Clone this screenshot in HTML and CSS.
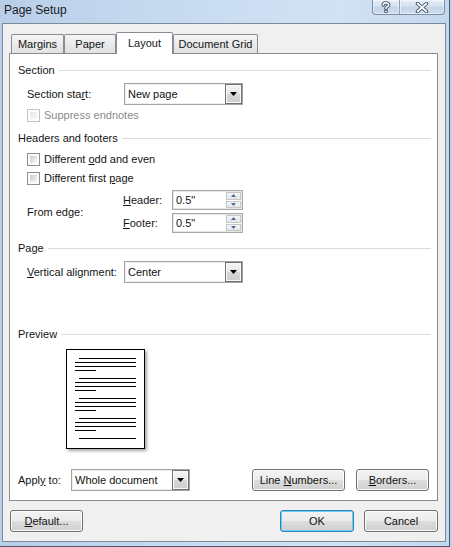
FILE: index.html
```html
<!DOCTYPE html>
<html>
<head>
<meta charset="utf-8">
<title>Page Setup</title>
<link rel="stylesheet" href="styles.css">
</head>
<body>
<div class="window">
  <div class="titlebar">
    <span class="title">Page Setup</span>
    <div class="caption">
      <div class="cbtn help">
        <svg width="10" height="12" viewBox="0 0 10 12">
          <path d="M2.2 4 C2.2 1.2 7.8 1.2 7.8 3.8 C7.8 5.6 5 5.8 5 7.6" fill="none" stroke="#3b4a5e" stroke-width="3.4" stroke-linecap="round"/>
          <path d="M2.2 4 C2.2 1.2 7.8 1.2 7.8 3.8 C7.8 5.6 5 5.8 5 7.6" fill="none" stroke="#fff" stroke-width="1.6" stroke-linecap="round"/>
          <rect x="3.3" y="8.8" width="3.4" height="3" rx="0.6" fill="#3b4a5e"/>
          <rect x="4.2" y="9.6" width="1.6" height="1.5" fill="#fff"/>
        </svg>
      </div>
      <div class="cbtn close">
        <svg width="14" height="11" viewBox="0 0 14 11">
          <path d="M2.5 1.5 L11.5 9.5 M11.5 1.5 L2.5 9.5" stroke="#3b4a5e" stroke-width="3.6" stroke-linecap="round"/>
          <path d="M2.5 1.5 L11.5 9.5 M11.5 1.5 L2.5 9.5" stroke="#fff" stroke-width="1.7" stroke-linecap="round"/>
        </svg>
      </div>
    </div>
  </div>

  <div class="client">
    <div class="tabs">
      <div class="tab t-margins">Margins</div>
      <div class="tab t-paper">Paper</div>
      <div class="tab t-layout active">Layout</div>
      <div class="tab t-grid">Document Grid</div>
    </div>

    <div class="panel">
      <div class="group"><span>Section</span><i class="rule"></i></div>

      <div class="row r-combo indent">
        <span class="lbl w97">Section sta<u>r</u>t:</span>
        <div class="combo"><span class="val">New page</span><span class="drop"><svg width="7" height="4" viewBox="0 0 7 4"><path d="M0 0h7L3.5 4z"/></svg></span></div>
      </div>

      <div class="row r-check r-suppress indent disabled">
        <span class="cb"></span><span>Suppress endnotes</span>
      </div>

      <div class="group g-headers"><span>Headers and footers</span><i class="rule"></i></div>

      <div class="row r-check r-odd indent">
        <span class="cb"></span><span>Different <u>o</u>dd and even</span>
      </div>
      <div class="row r-check r-first indent">
        <span class="cb"></span><span>Different first <u>p</u>age</span>
      </div>

      <div class="row r-edge indent">
        <span class="lbl w96">From edge:</span>
        <div class="spins">
          <div class="spinrow">
            <span class="lbl w49"><u>H</u>eader:</span>
            <div class="spin"><span class="val">0.5"</span>
              <span class="sbtns">
                <span class="sb"><svg width="5" height="3" viewBox="0 0 5 3"><path d="M2.5 0L5 3H0z"/></svg></span>
                <span class="sb"><svg width="5" height="3" viewBox="0 0 5 3"><path d="M0 0h5L2.5 3z"/></svg></span>
              </span>
            </div>
          </div>
          <div class="spinrow">
            <span class="lbl w49"><u>F</u>ooter:</span>
            <div class="spin"><span class="val">0.5"</span>
              <span class="sbtns">
                <span class="sb"><svg width="5" height="3" viewBox="0 0 5 3"><path d="M2.5 0L5 3H0z"/></svg></span>
                <span class="sb"><svg width="5" height="3" viewBox="0 0 5 3"><path d="M0 0h5L2.5 3z"/></svg></span>
              </span>
            </div>
          </div>
        </div>
      </div>

      <div class="group g-page"><span>Page</span><i class="rule"></i></div>

      <div class="row r-combo r-valign indent">
        <span class="lbl w97"><u>V</u>ertical alignment:</span>
        <div class="combo"><span class="val">Center</span><span class="drop"><svg width="7" height="4" viewBox="0 0 7 4"><path d="M0 0h7L3.5 4z"/></svg></span></div>
      </div>

      <div class="group g-preview"><span>Preview</span><i class="rule"></i></div>

      <div class="preview">
        <svg width="77" height="98" viewBox="0 0 77 98">
          <g fill="#000">
            <rect x="12" y="8" width="57" height="1"/>
            <rect x="8" y="12" width="61" height="1"/>
            <rect x="8" y="16" width="61" height="1"/>
            <rect x="8" y="20" width="21" height="1"/>

            <rect x="12" y="28" width="57" height="1"/>
            <rect x="8" y="32" width="61" height="1"/>
            <rect x="8" y="36" width="61" height="1"/>
            <rect x="8" y="40" width="21" height="1"/>

            <rect x="12" y="48" width="57" height="1"/>
            <rect x="8" y="52" width="61" height="1"/>
            <rect x="8" y="56" width="61" height="1"/>
            <rect x="8" y="60" width="21" height="1"/>

            <rect x="12" y="68" width="57" height="1"/>
            <rect x="8" y="72" width="61" height="1"/>
            <rect x="8" y="76" width="61" height="1"/>
            <rect x="8" y="80" width="21" height="1"/>

            <rect x="12" y="88" width="57" height="1"/>
          </g>
        </svg>
      </div>

      <div class="row r-apply">
        <span class="lbl w53">Appl<u>y</u> to:</span>
        <div class="combo"><span class="val">Whole document</span><span class="drop"><svg width="7" height="4" viewBox="0 0 7 4"><path d="M0 0h7L3.5 4z"/></svg></span></div>
        <div class="btn b-lines"><span>Line <u>N</u>umbers...</span></div>
        <div class="btn b-borders"><span><u>B</u>orders...</span></div>
      </div>
    </div>

    <div class="btnrow">
      <div class="btn b-default"><span><u>D</u>efault...</span></div>
      <div class="btn b-ok"><span>OK</span></div>
      <div class="btn b-cancel"><span>Cancel</span></div>
    </div>
  </div>
</div>
</body>
</html>
```
FILE: styles.css
```css
* { box-sizing: border-box; }

html, body {
  margin: 0;
  padding: 0;
}

body {
  width: 452px;
  height: 547px;
  overflow: hidden;
  font-family: "Liberation Sans", Arial, sans-serif;
  font-size: 11px;
  color: #151515;
  background: #c6d8ee;
}

u { text-decoration-thickness: 1px; text-underline-offset: 1px; }

.window {
  width: 452px;
  height: 547px;
  display: flex;
  flex-direction: column;
  background: linear-gradient(to right, #b9cfe9 0%, #c9dcf1 45%, #d2e2f4 75%, #c3d7ee 100%);
  box-shadow: inset -2px 0 0 #bdd2ea, inset -3px 0 0 #4b5767, inset 0 -1px 0 #4b5767;
}

/* title bar */
.titlebar {
  height: 23px;
  flex: none;
  display: flex;
  justify-content: space-between;
  align-items: flex-start;
}

.title {
  padding-left: 4px;
  font-size: 12px;
  line-height: 20px;
  color: #1a1a1a;
}

.caption {
  display: flex;
  margin-right: 7px;
}

.cbtn {
  height: 15px;
  border: 1px solid #7b8ca4;
  border-top: none;
  background: linear-gradient(#e6eef8 0%, #d5e1ef 45%, #c4d4e8 50%, #cfdcec 100%);
  box-shadow: inset 0 0 0 1px rgba(255,255,255,0.45);
  display: flex;
  align-items: center;
  justify-content: center;
}

.help {
  width: 28px;
  border-radius: 0 0 0 4px;
}

.close {
  width: 46px;
  border-left: 1px solid #8d9db3;
  border-radius: 0 0 4px 0;
  margin-left: -1px;
}

/* client area */
.client {
  flex: none;
  margin-left: 2px;
  width: 444px;
  height: 519px;
  border: 1px solid #7f8a98;
  background: #f0f0f0;
  padding: 8px 0 0 6px;
}

/* tabs */
.tabs {
  display: flex;
  align-items: flex-end;
  height: 21px;
  margin-left: 2px;
}

.tab {
  height: 19px;
  border: 1px solid #898c95;
  border-bottom: none;
  border-radius: 2px 2px 0 0;
  background: linear-gradient(#f5f5f5, #e8e8e8 60%, #e2e2e2);
  display: flex;
  align-items: center;
  justify-content: center;
  color: #151515;
}

.t-margins { width: 53px; }
.t-paper { width: 52px; }
.t-layout { width: 57px; }
.t-grid { width: 85px; }

.tab.active {
  height: 22px;
  margin-bottom: -1px;
  padding-bottom: 2px;
  background: #fff;
  position: relative;
  z-index: 1;
}

/* panel */
.panel {
  width: 429px;
  height: 448px;
  border: 1px solid #898c95;
  background: #fff;
  padding: 8px 6px 0 8px;
}

.group {
  height: 16px;
  display: flex;
  align-items: center;
  line-height: 16px;
  color: #151515;
}

.rule {
  flex: 1;
  height: 1px;
  margin-left: 4px;
  background: #d5dee6;
}

.g-headers { margin-top: 8px; }
.g-page { margin-top: 7px; }
.g-preview { margin-top: 43px; }

.row {
  display: flex;
  align-items: center;
}

.indent { margin-left: 9px; }

.lbl { flex: none; white-space: nowrap; }
.w97 { width: 97px; }
.w96 { width: 96px; }
.w49 { width: 49px; }
.w53 { width: 53px; }

.r-combo { margin-top: 5px; height: 22px; }

.r-check { height: 13px; line-height: 13px; }
.r-suppress { margin-top: 4px; }
.r-odd { margin-top: 7px; }
.r-first { margin-top: 6px; }
.disabled { color: #8b8b8b; }

.cb {
  flex: none;
  width: 13px;
  height: 13px;
  margin-right: 4px;
  border: 1px solid #8e8f8f;
  padding: 2px;
  background: linear-gradient(135deg, #c9cdd3, #eef0f2 80%, #f8f8f8) content-box, #fbfbfb;
}

.disabled .cb {
  border-color: #c4c4c4;
  background: linear-gradient(135deg, #e9e9e9, #f7f7f7) content-box, #fdfdfd;
}

/* combo box */
.combo {
  flex: none;
  width: 119px;
  height: 22px;
  border: 1px solid #a3a3a3;
  background: #fff;
  display: flex;
  padding-left: 3px;
  box-shadow: inset 0 0 0 1px #eeeeee;
}

.combo .val {
  align-self: center;
  color: #111;
}

.drop {
  margin-left: auto;
  width: 17px;
  border: 1px solid #707070;
  background: linear-gradient(#f4f4f4, #e8e8e8 50%, #d7d7d7 51%, #cdcdcd);
  box-shadow: inset 0 0 0 1px #fafafa;
  display: flex;
  align-items: center;
  justify-content: center;
}

.drop svg { fill: #000; }

/* spin boxes */
.r-edge { margin-top: 5px; }

.spins {
  display: flex;
  flex-direction: column;
  gap: 3px;
}

.spinrow {
  display: flex;
  align-items: center;
  height: 20px;
}

.spin {
  width: 71px;
  height: 20px;
  border: 1px solid #a9a9a9;
  box-shadow: inset 0 0 0 1px #e6e6e6;
  background: #fff;
  display: flex;
  padding: 1px 1px 1px 3px;
}

.spin .val { align-self: center; color: #111; }

.sbtns {
  margin-left: auto;
  width: 15px;
  display: flex;
  flex-direction: column;
  gap: 1px;
}

.sb {
  flex: 1;
  border: 1px solid #c6c6c6;
  background: linear-gradient(#f6f6f6, #e6e6e6);
  display: flex;
  align-items: center;
  justify-content: center;
}

.sb svg { fill: #4668a8; }

/* preview */
.preview {
  margin-top: 7px;
  margin-left: 48px;
  width: 79px;
  height: 100px;
  border: 1px solid #000;
  background: #fff;
  box-shadow: 2px 2px 3px rgba(0, 0, 0, 0.35);
}

.preview svg { display: block; }

/* apply row */
.r-apply {
  margin-top: 20px;
  height: 22px;
}

/* buttons */
.btn {
  flex: none;
  height: 22px;
  border: 1px solid #707070;
  border-radius: 3px;
  background: linear-gradient(#f3f3f3 0%, #ebebeb 48%, #dddddd 52%, #d0d0d0 100%);
  box-shadow: inset 0 0 0 1px #fbfbfb;
  display: flex;
  align-items: center;
  justify-content: center;
  color: #111;
  white-space: nowrap;
}

.b-lines { width: 93px; margin-left: auto; margin-right: 11px; }
.b-borders { width: 73px; margin-right: 2px; }

.btnrow {
  display: flex;
  width: 429px;
  margin-top: 9px;
}

.b-default { width: 73px; margin-left: 1px; }
.b-ok {
  width: 74px;
  margin-left: auto;
  border-color: #3c7fb1;
  box-shadow: inset 0 0 0 1px #5fd0f6;
}
.b-cancel { width: 74px; margin-left: 10px; }
```
